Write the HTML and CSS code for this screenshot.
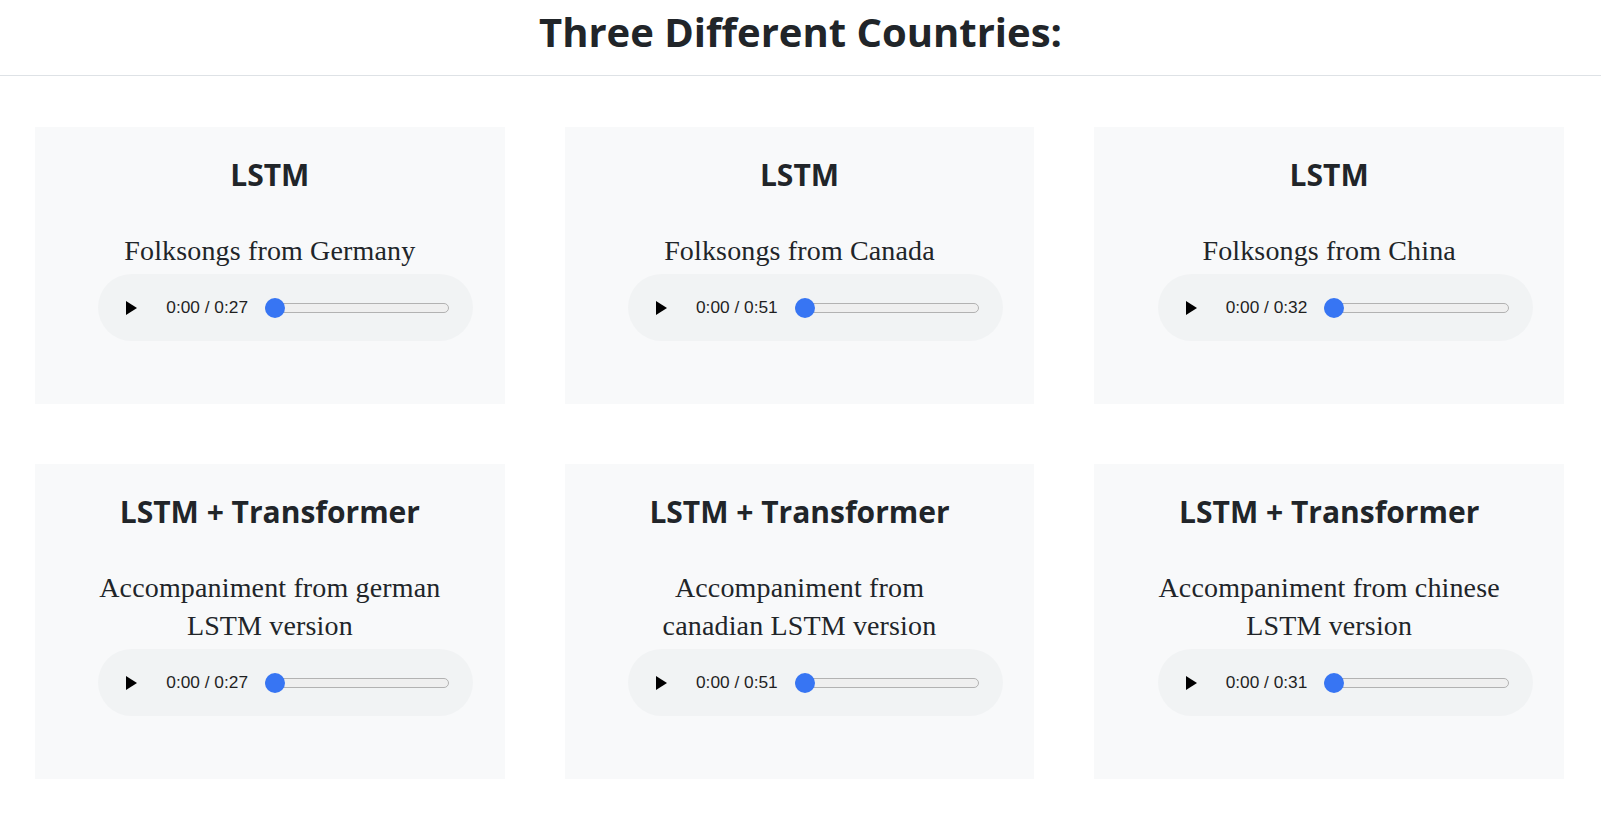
FILE: index.html
```html
<!DOCTYPE html>
<html lang="en">
<head>
<meta charset="utf-8">
<title>Three Different Countries</title>
<link rel="stylesheet" href="styles.css">
</head>
<body>
<header class="top">
  <h1 class="page-title">Three Different Countries:</h1>
</header>
<main class="grid">
  <section class="card">
    <h2 class="card-title">LSTM</h2>
    <p class="card-text">Folksongs from Germany</p>
    <div class="player"><svg class="play" viewBox="0 0 11 14"><path d="M0 0 L11 7 L0 14 Z"/></svg><span class="time">0:00 / 0:27</span><div class="seek"><div class="track"></div><div class="thumb"></div></div></div>
  </section>
  <section class="card">
    <h2 class="card-title">LSTM</h2>
    <p class="card-text">Folksongs from Canada</p>
    <div class="player"><svg class="play" viewBox="0 0 11 14"><path d="M0 0 L11 7 L0 14 Z"/></svg><span class="time">0:00 / 0:51</span><div class="seek"><div class="track"></div><div class="thumb"></div></div></div>
  </section>
  <section class="card">
    <h2 class="card-title">LSTM</h2>
    <p class="card-text">Folksongs from China</p>
    <div class="player"><svg class="play" viewBox="0 0 11 14"><path d="M0 0 L11 7 L0 14 Z"/></svg><span class="time">0:00 / 0:32</span><div class="seek"><div class="track"></div><div class="thumb"></div></div></div>
  </section>
  <section class="card">
    <h2 class="card-title">LSTM + Transformer</h2>
    <p class="card-text">Accompaniment from german LSTM version</p>
    <div class="player"><svg class="play" viewBox="0 0 11 14"><path d="M0 0 L11 7 L0 14 Z"/></svg><span class="time">0:00 / 0:27</span><div class="seek"><div class="track"></div><div class="thumb"></div></div></div>
  </section>
  <section class="card">
    <h2 class="card-title">LSTM + Transformer</h2>
    <p class="card-text">Accompaniment from canadian LSTM version</p>
    <div class="player"><svg class="play" viewBox="0 0 11 14"><path d="M0 0 L11 7 L0 14 Z"/></svg><span class="time">0:00 / 0:51</span><div class="seek"><div class="track"></div><div class="thumb"></div></div></div>
  </section>
  <section class="card">
    <h2 class="card-title">LSTM + Transformer</h2>
    <p class="card-text">Accompaniment from chinese LSTM version</p>
    <div class="player"><svg class="play" viewBox="0 0 11 14"><path d="M0 0 L11 7 L0 14 Z"/></svg><span class="time">0:00 / 0:31</span><div class="seek"><div class="track"></div><div class="thumb"></div></div></div>
  </section>
</main>
</body>
</html>
```
FILE: styles.css
```css
* { box-sizing: border-box; }
html, body { margin: 0; padding: 0; background: #ffffff; }
body { color: #212529; font-family: "Open Sans", "Liberation Sans", sans-serif; }

.top {
  padding: 8px 0 19px;
  border-bottom: 1px solid #dee2e6;
  text-align: center;
}
.page-title {
  margin: 0;
  font-size: 40px;
  line-height: 48px;
  font-weight: 700;
  color: #212529;
}

.grid {
  display: grid;
  grid-template-columns: repeat(3, 1fr);
  column-gap: 60px;
  row-gap: 60px;
  padding: 51px 37px 37px 35px;
}

.card {
  background: #f8f9fa;
  display: flex;
  flex-direction: column;
  align-items: center;
  padding: 30px 0 63px;
  text-align: center;
}
.card-title {
  margin: 0 0 39px;
  font-size: 30px;
  line-height: 36px;
  font-weight: 700;
  color: #212529;
}
.card-text {
  margin: 0 0 4px;
  padding: 0 60px;
  font-family: "Liberation Serif", "Times New Roman", serif;
  font-size: 28px;
  line-height: 38px;
  letter-spacing: 0.15px;
  color: #212529;
}

.player {
  width: 375px;
  height: 67px;
  margin-left: 32px;
  border-radius: 34px;
  background: #f1f3f4;
  display: flex;
  align-items: center;
  padding: 0 24px 0 28px;
}
.play {
  width: 11px;
  height: 14px;
  fill: #000000;
  flex: none;
}
.time {
  margin-left: 29px;
  font-family: "Liberation Sans", Arial, sans-serif;
  font-size: 17.3px;
  color: #1f1f1f;
  white-space: nowrap;
}
.seek {
  position: relative;
  flex: 1;
  margin-left: 17px;
  height: 20px;
  display: flex;
  align-items: center;
}
.track {
  width: 100%;
  height: 10px;
  border: 1px solid #b2b2b2;
  border-radius: 5px;
  background: #efefef;
}
.thumb {
  position: absolute;
  left: 0;
  top: 0;
  width: 20px;
  height: 20px;
  border-radius: 50%;
  background: #3775f3;
}
```
